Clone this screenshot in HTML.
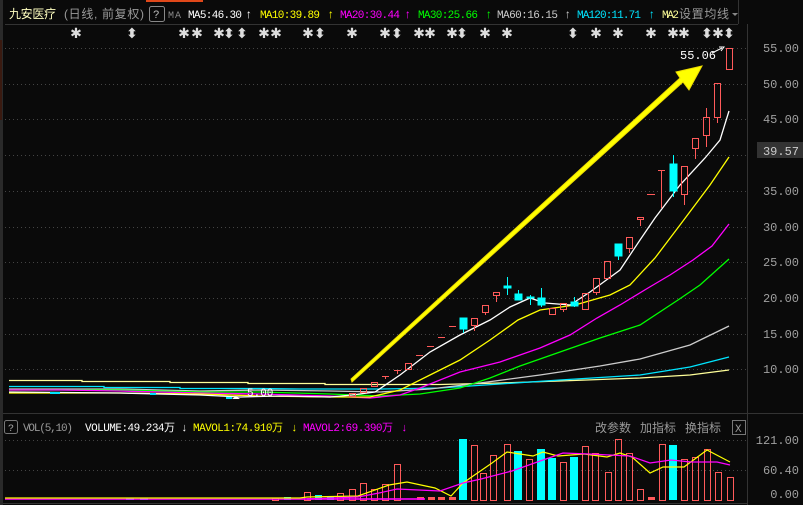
<!DOCTYPE html>
<html><head><meta charset="utf-8"><style>
html,body{margin:0;padding:0;background:#0a0a0a;}
svg{display:block;font-family:"Liberation Mono","Noto Sans CJK SC",monospace;}
</style></head><body>
<svg width="803" height="505" viewBox="0 0 803 505" xmlns="http://www.w3.org/2000/svg">
<rect width="803" height="505" fill="#0a0a0a"/>
<rect x="0" y="0" width="3" height="505" fill="#2a2a2a"/>
<rect x="0" y="40" width="2" height="80" fill="#3a1a10"/>
<rect x="146" y="0" width="57" height="2" fill="#e0481a"/>
<line x1="5" y1="24.5" x2="738" y2="24.5" stroke="#333"/>
<line x1="738.5" y1="0" x2="738.5" y2="24" stroke="#333"/>
<line x1="747.5" y1="24" x2="747.5" y2="505" stroke="#333"/>
<line x1="3" y1="413.5" x2="803" y2="413.5" stroke="#333"/>
<line x1="3" y1="503.5" x2="748" y2="503.5" stroke="#333"/>

<g font-size="12">
<text x="9" y="18" fill="#ffffc0" font-family="Liberation Sans,Noto Sans CJK SC,sans-serif" textLength="47">九安医疗</text>
<text x="64" y="18" fill="#9a9a9a" font-family="Liberation Sans,Noto Sans CJK SC,sans-serif" textLength="80">(日线, 前复权)</text>
<rect x="149.5" y="6.5" width="15" height="15" rx="2" fill="none" stroke="#888"/>
<text x="153" y="18" fill="#bbb" font-size="11">?</text>
<text x="168" y="18" fill="#888" font-size="10" textLength="13">MA</text>
<text x="188" y="18" fill="#fff" font-size="11" textLength="54">MA5:46.30</text>
<text x="245" y="18" fill="#fff">↑</text>
<text x="260" y="18" fill="#ffff00" font-size="11" textLength="60">MA10:39.89</text>
<text x="327" y="18" fill="#ffff00">↑</text>
<text x="340" y="18" fill="#ff00ff" font-size="11" textLength="60">MA20:30.44</text>
<text x="404" y="18" fill="#ff00ff">↑</text>
<text x="418" y="18" fill="#00ff00" font-size="11" textLength="60">MA30:25.66</text>
<text x="485" y="18" fill="#00ff00">↑</text>
<text x="497" y="18" fill="#ccc" font-size="11" textLength="61">MA60:16.15</text>
<text x="564" y="18" fill="#ccc">↑</text>
<text x="577" y="18" fill="#00e5ff" font-size="11" textLength="64">MA120:11.71</text>
<text x="648" y="18" fill="#00e5ff">↑</text>
<text x="662" y="18" fill="#ffff99" font-size="11" textLength="17">MA2</text>
<text x="679" y="18" fill="#999" font-family="Liberation Sans,Noto Sans CJK SC,sans-serif" textLength="50">设置均线</text>
<path d="M732 13 L738 13 L735 16 Z" fill="#888"/>
</g>
<g fill="#ddd" font-size="14" font-weight="bold" text-anchor="middle" font-family="DejaVu Sans,sans-serif">
<text x="76" y="38">✱</text><text x="132" y="38">⬍</text><text x="184" y="38">✱</text><text x="197" y="38">✱</text><text x="219" y="38">✱</text><text x="229" y="38">⬍</text><text x="242" y="38">⬍</text><text x="264" y="38">✱</text><text x="276" y="38">✱</text><text x="308" y="38">✱</text><text x="320" y="38">⬍</text><text x="352" y="38">✱</text><text x="385" y="38">✱</text><text x="397" y="38">⬍</text><text x="419" y="38">✱</text><text x="430" y="38">✱</text><text x="452" y="38">✱</text><text x="462" y="38">⬍</text><text x="485" y="38">✱</text><text x="507" y="38">✱</text><text x="573" y="38">⬍</text><text x="596" y="38">✱</text><text x="618" y="38">✱</text><text x="651" y="38">✱</text><text x="673" y="38">✱</text><text x="684" y="38">✱</text><text x="707" y="38">⬍</text><text x="718" y="38">✱</text><text x="729" y="38">⬍</text>
</g>

<g stroke="#444" stroke-dasharray="1,3">
<line x1="5" y1="48.5" x2="747" y2="48.5"/>
<line x1="5" y1="84.5" x2="747" y2="84.5"/>
<line x1="5" y1="119.5" x2="747" y2="119.5"/>
<line x1="5" y1="155.5" x2="747" y2="155.5"/>
<line x1="5" y1="191.5" x2="747" y2="191.5"/>
<line x1="5" y1="227.5" x2="747" y2="227.5"/>
<line x1="5" y1="262.5" x2="747" y2="262.5"/>
<line x1="5" y1="298.5" x2="747" y2="298.5"/>
<line x1="5" y1="334.5" x2="747" y2="334.5"/>
<line x1="5" y1="369.5" x2="747" y2="369.5"/>
<line x1="5" y1="440.5" x2="747" y2="440.5"/>
<line x1="5" y1="470.5" x2="747" y2="470.5"/>
</g>
<g fill="#a0a0a0" font-size="12" text-anchor="end">
<text x="799" y="52">55.00</text><text x="799" y="88">50.00</text><text x="799" y="123">45.00</text>
<text x="799" y="195">35.00</text><text x="799" y="231">30.00</text><text x="799" y="266">25.00</text>
<text x="799" y="302">20.00</text><text x="799" y="338">15.00</text><text x="799" y="373">10.00</text>
<text x="799" y="444">121.00</text><text x="799" y="474">60.40</text><text x="799" y="498">0.00</text>
</g>
<rect x="757" y="142" width="46" height="16" fill="#333"/>
<text x="799" y="155" fill="#ccc" font-size="12" text-anchor="end">39.57</text>

<g fill="none" stroke-width="1.3">
<polyline stroke="#ffff99" points="9,380.5 82,380.5 82,381.5 170,381.5 170,382.5 248,382.5 248,383.5 325,383.5 325,384.5 440,384.5 500,383 560,381 640,378 690,375 729,370"/>
<polyline stroke="#00e5ff" points="9,386.5 104,386.5 104,387.5 180,387.5 180,388.5 260,388.5 300,389 380,389 440,388 500,384 560,380 640,375 690,367 729,357"/>
<polyline stroke="#ccc" points="9,389 120,389 200,391 260,390 330,391 380,392 430,389 480,383 540,375 600,366 640,359 690,345 729,326"/>
<polyline stroke="#00ff00" points="9,390 120,390 200,392 260,392 330,394 380,396 420,394 460,388 490,378 520,366 560,352 600,338 640,325 678,300 700,285 729,259"/>
<polyline stroke="#ff00ff" points="9,390 60,390 120,391 200,393 260,394 330,396 370,398 400,395 420,388 460,372 500,362 540,348 570,335 597,318 620,305 648,288 670,275 693,260 712,246 729,224"/>
<polyline stroke="#ffff00" points="9,393 120,393 200,394 260,396 330,397 370,397 400,390 430,375 460,360 490,340 518,320 540,310 575,305 610,295 630,285 655,258 680,225 710,185 729,157"/>
<polyline stroke="#ffffff" points="9,392 120,393 200,395 240,397 280,396 330,397 352,395 375,392 400,375 430,352 460,335 490,320 510,307 530,298 545,303 570,305 590,292 620,270 640,240 655,218 680,185 705,158 720,140 729,111"/>
</g>
<g fill="#00e5ff"><rect x="50" y="392" width="10" height="2"/><rect x="150" y="393" width="6" height="2"/><rect x="226" y="397" width="6" height="2"/></g>
<path d="M232 399 L236 396 L240 399 Z" fill="#fff"/>
<text x="247" y="396" fill="#fff" font-size="11">5.00</text>

<path d="M351 379 L352 382 L683 82 L689 90 L702 66 L676 72 L680 78 Z" fill="#ffff00" stroke="#eedd00" stroke-width="1"/>

<g fill="none" stroke="#ff5a5a" stroke-width="1">
<rect x="726.5" y="48.5" width="6" height="21"/>
<rect x="714.5" y="83.5" width="6" height="34"/><line x1="717.5" y1="117" x2="717.5" y2="123"/>
<rect x="703.5" y="117.5" width="6" height="18"/><line x1="706.5" y1="108" x2="706.5" y2="117"/><line x1="706.5" y1="136" x2="706.5" y2="147"/>
<rect x="692.5" y="138.5" width="6" height="10"/><line x1="695.5" y1="148" x2="695.5" y2="159"/>
<rect x="681.5" y="166.5" width="6" height="28"/><line x1="684.5" y1="194" x2="684.5" y2="205"/>
<line x1="658" y1="170.5" x2="665" y2="170.5"/><line x1="661.5" y1="170" x2="661.5" y2="208"/>
<line x1="647" y1="194.5" x2="655" y2="194.5"/>
<rect x="637.5" y="217.5" width="6" height="2"/><line x1="640.5" y1="220" x2="640.5" y2="226"/>
<rect x="626.5" y="237.5" width="6" height="11"/><line x1="629.5" y1="248" x2="629.5" y2="253"/>
<rect x="604.5" y="261.5" width="6" height="17"/>
<rect x="593.5" y="278.5" width="6" height="14"/><line x1="596.5" y1="292" x2="596.5" y2="295"/>
<rect x="582.5" y="293.5" width="6" height="16"/>
<rect x="560.5" y="303.5" width="6" height="6"/><line x1="563.5" y1="309" x2="563.5" y2="312"/>
<rect x="549.5" y="308.5" width="6" height="6"/>
<rect x="493.5" y="292.5" width="6" height="3"/><line x1="496.5" y1="295" x2="496.5" y2="302"/>
<rect x="482.5" y="305.5" width="6" height="7"/><line x1="485.5" y1="312" x2="485.5" y2="315"/>
<rect x="471.5" y="318.5" width="6" height="7"/><line x1="474.5" y1="325" x2="474.5" y2="331"/>
<line x1="449" y1="326.5" x2="456" y2="326.5"/>
<line x1="438" y1="337.5" x2="445" y2="337.5"/>
<line x1="427" y1="346.5" x2="434" y2="346.5"/>
<line x1="416" y1="355.5" x2="423" y2="355.5"/>
<rect x="405.5" y="363.5" width="6" height="6"/>
<line x1="394" y1="370.5" x2="401" y2="370.5"/><line x1="397.5" y1="370" x2="397.5" y2="374"/>
<line x1="382" y1="376.5" x2="389" y2="376.5"/><line x1="385.5" y1="376" x2="385.5" y2="379"/>
<rect x="371.5" y="382.5" width="6" height="4"/>
<rect x="360.5" y="388.5" width="6" height="4"/>
<rect x="349.5" y="393.5" width="6" height="3"/>
</g>
<g fill="#00ffff" stroke="#00ffff">
<rect x="670" y="164" width="7" height="27"/><line x1="673.5" y1="155" x2="673.5" y2="197"/>
<rect x="615" y="244" width="7" height="12"/><line x1="618.5" y1="256" x2="618.5" y2="260"/>
<rect x="571" y="302" width="7" height="4"/><line x1="574.5" y1="297" x2="574.5" y2="307"/>
<rect x="538" y="298" width="7" height="7"/><line x1="541.5" y1="288" x2="541.5" y2="307"/>
<rect x="527" y="297" width="7" height="1"/><line x1="530.5" y1="295" x2="530.5" y2="305"/>
<rect x="515" y="294" width="7" height="6"/><line x1="518.5" y1="290" x2="518.5" y2="300"/>
<rect x="504" y="286" width="7" height="2"/><line x1="507.5" y1="277" x2="507.5" y2="295"/>
<rect x="460" y="318" width="7" height="11"/><line x1="463.5" y1="329" x2="463.5" y2="333"/>
</g>
<text x="680" y="59" fill="#fff" font-size="12">55.06</text>
<path d="M712 53 L722 48" stroke="#fff" fill="none"/><path d="M719 47 L724 47 L721 51" stroke="#fff" fill="none"/>

<g font-size="11">
<rect x="4.5" y="420.5" width="13" height="13" rx="2" fill="none" stroke="#777"/>
<text x="8" y="431" fill="#aaa" font-size="10">?</text>
<text x="23" y="431" fill="#999" textLength="50">VOL(5,10)</text>
<text x="85" y="431" fill="#fff" textLength="90">VOLUME:49.234万</text>
<text x="181" y="431" fill="#fff">↓</text>
<text x="193" y="431" fill="#ffff00" textLength="90">MAVOL1:74.910万</text>
<text x="291" y="431" fill="#ffff00">↓</text>
<text x="303" y="431" fill="#ff00ff" textLength="90">MAVOL2:69.390万</text>
<text x="401" y="431" fill="#ff00ff">↓</text>
<g fill="#999" font-family="Liberation Sans,Noto Sans CJK SC,sans-serif" font-size="12">
<text x="595" y="432">改参数</text><text x="640" y="432">加指标</text><text x="685" y="432">换指标</text></g>
<rect x="732.5" y="420.5" width="13" height="14" fill="none" stroke="#777"/>
<text x="735" y="432" fill="#999">X</text>
</g>
<g fill="none" stroke="#ff5a5a">
<rect x="471.5" y="445.5" width="6" height="55"/><rect x="480.5" y="473.5" width="6" height="27"/><rect x="490.5" y="455.5" width="6" height="45"/><rect x="504.5" y="444.5" width="6" height="56"/><rect x="526.5" y="459.5" width="6" height="41"/><rect x="560.5" y="462.5" width="6" height="38"/><rect x="582.5" y="446.5" width="6" height="54"/><rect x="592.5" y="453.5" width="6" height="47"/><rect x="605.5" y="472.5" width="6" height="28"/><rect x="615.5" y="439.5" width="6" height="61"/><rect x="626.5" y="453.5" width="6" height="47"/><rect x="637.5" y="489.5" width="6" height="11"/><rect x="659.5" y="444.5" width="6" height="56"/><rect x="681.5" y="459.5" width="6" height="41"/><rect x="692.5" y="457.5" width="6" height="43"/><rect x="704.5" y="449.5" width="6" height="51"/><rect x="715.5" y="472.5" width="6" height="28"/><rect x="727.5" y="477.5" width="6" height="23"/>
<rect x="394.5" y="464.5" width="6" height="36"/><rect x="382.5" y="484.5" width="6" height="16"/><rect x="371.5" y="489.5" width="6" height="11"/><rect x="360.5" y="483.5" width="6" height="17"/><rect x="349.5" y="489.5" width="6" height="11"/><rect x="337.5" y="493.5" width="6" height="7"/><rect x="304.5" y="492.5" width="6" height="8"/><rect x="272.5" y="498.5" width="6" height="2"/>
</g>
<g fill="#ff5a5a"><rect x="417" y="497" width="7" height="3"/><rect x="428" y="497" width="7" height="3"/><rect x="438" y="497" width="7" height="3"/><rect x="449" y="497" width="7" height="3"/><rect x="648" y="497" width="7" height="3"/></g>
<g fill="#00ffff">
<rect x="459" y="439" width="8" height="61"/><rect x="514" y="451" width="8" height="49"/><rect x="537" y="449" width="8" height="51"/><rect x="548" y="458" width="8" height="42"/><rect x="570" y="457" width="8" height="43"/><rect x="669" y="445" width="8" height="55"/>
<rect x="315" y="495" width="7" height="5"/><rect x="327" y="496" width="7" height="4"/><rect x="284" y="497" width="7" height="3"/><rect x="126" y="498" width="8" height="2"/><rect x="140" y="498" width="8" height="2"/>
</g>
<rect x="5" y="498" width="420" height="2" fill="#ff00ff" opacity="0.8"/>
<polyline fill="none" stroke="#ffff00" stroke-width="1.2" points="5,498 300,498 307,497 358,496 389,485 407,482 435,488 451,496 463,483 492,463 507,452 520,454 533,456 543,452 558,456 584,454 607,457 620,453 632,457 650,473 663,467 684,467 707,450 730,462"/>
<polyline fill="none" stroke="#ff00ff" stroke-width="1.2" points="307,499 358,497 379,493 397,489 440,491 463,483 481,479 512,471 543,460 563,453 589,454 630,456 650,463 671,460 691,462 717,462 730,465"/>
</svg>
</body></html>
